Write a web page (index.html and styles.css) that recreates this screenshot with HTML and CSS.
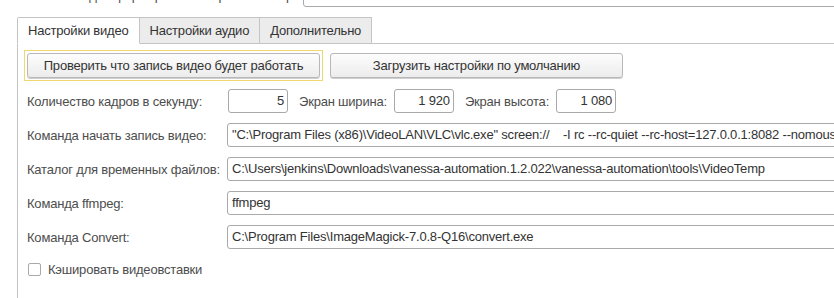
FILE: index.html
```html
<!DOCTYPE html>
<html lang="ru">
<head>
  <meta charset="UTF-8">
  <title>Настройки видео</title>
  <link rel="stylesheet" href="styles.css">
</head>
<body>

  <div class="top-row">
    <span class="top-label">Каталог для формирования скриншотов при ошибке:</span>
    <div class="field top-field"></div>
  </div>

  <div class="tabs">
    <div class="tab active">Настройки видео</div>
    <div class="tab">Настройки аудио</div>
    <div class="tab">Дополнительно</div>
    <div class="tab-rest"></div>
  </div>

  <div class="panel">
    <div class="buttons">
      <div class="focus-frame">
        <button class="btn">Проверить что запись видео будет работать</button>
      </div>
      <button class="btn">Загрузить настройки по умолчанию</button>
    </div>

    <div class="row">
      <label class="label">Количество кадров в секунду:</label>
      <div class="field num">5</div>
      <label class="sublabel">Экран ширина:</label>
      <div class="field num">1 920</div>
      <label class="sublabel">Экран высота:</label>
      <div class="field num">1 080</div>
    </div>

    <div class="row">
      <label class="label">Команда начать запись видео:</label>
      <div class="field wide">"C:\Program Files (x86)\VideoLAN\VLC\vlc.exe" screen:// &nbsp;&nbsp;&nbsp;-I rc --rc-quiet --rc-host=127.0.0.1:8082 --nomouse</div>
    </div>

    <div class="row">
      <label class="label">Каталог для временных файлов:</label>
      <div class="field wide">C:\Users\jenkins\Downloads\vanessa-automation.1.2.022\vanessa-automation\tools\VideoTemp</div>
    </div>

    <div class="row">
      <label class="label">Команда ffmpeg:</label>
      <div class="field wide">ffmpeg</div>
    </div>

    <div class="row">
      <label class="label">Команда Convert:</label>
      <div class="field wide">C:\Program Files\ImageMagick-7.0.8-Q16\convert.exe</div>
    </div>

    <div class="check-row">
      <span class="checkbox"></span>
      <span>Кэшировать видеовставки</span>
    </div>
  </div>

</body>
</html>
```

FILE: styles.css
```css
body {
  margin: 0;
  font-family: "Liberation Sans", Arial, sans-serif;
  font-size: 13px;
  letter-spacing: -0.2px;
  color: #4d4d4d;
  background-color: #fff;
  height: 298px;
  overflow: hidden;
}

.top-row {
  display: flex;
  align-items: center;
  height: 24px;
  margin-top: -17px;
  padding-left: 40px;
}

.top-label {
  width: 263px;
  white-space: nowrap;
  overflow: hidden;
}

.field {
  box-sizing: border-box;
  height: 24px;
  line-height: 22px;
  padding: 0 4px;
  border: 1px solid #a9a9a9;
  border-radius: 3px;
  background-color: #fff;
  color: #333;
  white-space: nowrap;
  overflow: hidden;
}

.top-field {
  flex: 1;
  margin-right: -10px;
}

.tabs {
  display: flex;
  margin-top: 10px;
  padding-left: 17px;
}

.tab {
  box-sizing: border-box;
  height: 27px;
  line-height: 26px;
  padding: 0 10px;
  border: 1px solid #c4c4c4;
  border-left: none;
  background-color: #ececec;
  color: #333;
}

.tab.active {
  border-left: 1px solid #c4c4c4;
  border-bottom-color: #fff;
  background-color: #fff;
  border-radius: 2px 0 0 0;
}

.tab-rest {
  flex: 1;
  border-bottom: 1px solid #c4c4c4;
}

.panel {
  margin-left: 17px;
  border-left: 1px solid #c4c4c4;
  padding: 6px 0 0 6px;
  height: 260px;
}

.buttons {
  display: flex;
  align-items: center;
  gap: 7px;
}

.focus-frame {
  border: 1px solid #efd870;
  padding: 2px;
}

.btn {
  display: block;
  box-sizing: border-box;
  width: 293px;
  height: 25px;
  padding: 0;
  font-family: inherit;
  font-size: 13px;
  letter-spacing: inherit;
  color: #333;
  border: 1px solid #b8b8b8;
  border-radius: 3px;
  background: linear-gradient(#fdfdfd, #ececec);
  box-shadow: 0 1px 0 #cfcfcf;
}

.row {
  display: flex;
  align-items: center;
  padding-left: 3px;
  margin-top: 10px;
}

.buttons + .row {
  margin-top: 8px;
}

.label {
  width: 200px;
  flex-shrink: 0;
  white-space: nowrap;
}

.num {
  width: 60px;
  margin-left: 1px;
  text-align: right;
  padding-right: 3px;
}

.sublabel {
  margin: 0 6px 0 11px;
}

.wide {
  flex: 1;
  margin-right: -10px;
}

.check-row {
  display: flex;
  align-items: center;
  gap: 7px;
  margin-top: 13px;
  padding-left: 4px;
}

.checkbox {
  box-sizing: border-box;
  width: 13px;
  height: 13px;
  border: 1px solid #a9a9a9;
  border-radius: 2px;
  background-color: #fff;
}
```
